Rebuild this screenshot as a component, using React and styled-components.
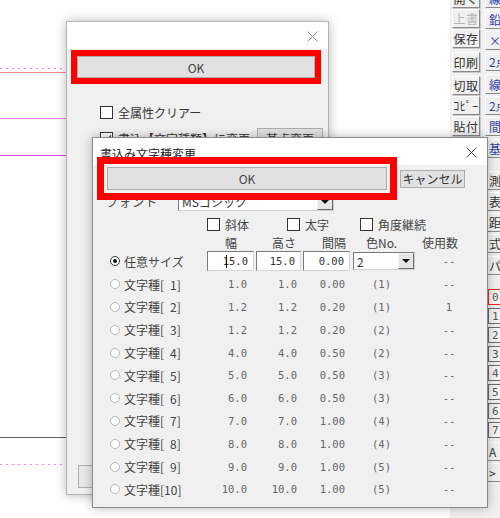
import React from "react";
import styled, { createGlobalStyle } from "styled-components";

const GlobalStyle = createGlobalStyle`
  html, body { margin: 0; padding: 0; background: #fff; }
  body {
    font-family: "Noto Sans CJK JP", "Noto Sans", sans-serif;
    font-size: 12px;
    color: #333;
  }
`;

const leftTools = [
  { t: "開く", h: 19, m: -11 },
  { t: "上書", h: 19, m: 1, off: true },
  { t: "保存", h: 19, m: 1 },
  { t: "印刷", h: 20, m: 4 },
  { t: "切取", h: 19, m: 4 },
  { t: "ｺﾋﾟｰ", h: 19, m: 1 },
  { t: "貼付", h: 20, m: 1 },
];

const rightTools = [
  { t: "線", h: 19, m: -11, blue: true },
  { t: "鉛", h: 19, m: 2, blue: true },
  { t: "×", h: 19, m: 2, blue: true },
  { t: "2点", h: 19, m: 2, blue: true },
  { t: "線", h: 20, m: 3, blue: true },
  { t: "2点", h: 19, m: 2, blue: true },
  { t: "間", h: 19, m: 2, blue: true },
  { t: "基", h: 19, m: 3, blue: true },
  { t: "測", h: 19, m: 13 },
  { t: "表", h: 19, m: 2 },
  { t: "距", h: 19, m: 2 },
  { t: "式", h: 19, m: 2 },
  { t: "パ", h: 19, m: 3 },
];

const layers = ["0", "1", "2", "3", "4", "5", "6", "7"];

const rows = [
  ["1.0", "1.0", "0.00", "(1)", "--"],
  ["1.2", "1.2", "0.20", "(1)", "1"],
  ["1.2", "1.2", "0.20", "(2)", "--"],
  ["4.0", "4.0", "0.50", "(2)", "--"],
  ["5.0", "5.0", "0.50", "(3)", "--"],
  ["6.0", "6.0", "0.50", "(3)", "--"],
  ["7.0", "7.0", "1.00", "(4)", "--"],
  ["8.0", "8.0", "1.00", "(4)", "--"],
  ["9.0", "9.0", "1.00", "(5)", "--"],
  ["10.0", "10.0", "1.00", "(5)", "--"],
];

function CloseIcon({ color }) {
  return (
    <svg width="11" height="11" viewBox="0 0 11 11">
      <path d="M0.5 0.5L10.5 10.5M10.5 0.5L0.5 10.5" stroke={color} strokeWidth="1" />
    </svg>
  );
}

function App() {
  return (
    <>
      <GlobalStyle />
      <Screen>
        <Canvas>
          <svg width="450" height="518">
            <line x1="0" y1="68.5" x2="200" y2="68.5" stroke="#ff70ff" strokeDasharray="2 4" />
            <line x1="0" y1="72.5" x2="200" y2="72.5" stroke="#f28a8a" />
            <line x1="0" y1="118.5" x2="200" y2="118.5" stroke="#ff80ff" />
            <line x1="0" y1="155.5" x2="200" y2="155.5" stroke="#d848d8" />
            <line x1="0" y1="437.5" x2="200" y2="437.5" stroke="#606060" />
            <line x1="0" y1="464.5" x2="200" y2="464.5" stroke="#ff70ff" strokeDasharray="2 4" />
          </svg>
        </Canvas>

        <Toolbar>
          <ToolColumn $w={28}>
            {leftTools.map((b, i) => (
              <ToolBtn key={i} $h={b.h} $m={b.m} $off={b.off}>
                {b.t}
              </ToolBtn>
            ))}
          </ToolColumn>
          <ToolColumn $w={30}>
            {rightTools.map((b, i) => (
              <SideBtn key={i} $h={b.h} $m={b.m} $blue={b.blue}>
                {b.t}
              </SideBtn>
            ))}
            {layers.map((n, i) => (
              <LayerBtn key={n} $m={i === 0 ? 14 : 3} $active={i === 0}>
                {n}
              </LayerBtn>
            ))}
            <SideBtn $h={19} $m={4}>A</SideBtn>
            <SideBtn $h={19} $m={2}>&gt;</SideBtn>
          </ToolColumn>
        </Toolbar>

        <BackDialog>
          <TitleBar>
            <span />
            <CloseBox>
              <CloseIcon color="#8c8c8c" />
            </CloseBox>
          </TitleBar>
          <BackBody>
            <WideButton $w={238} $h={22} $ring={6} $offset={0}>OK</WideButton>
            <OptionLine $mt={28}>
              <CheckBox />
              <span>全属性クリアー</span>
            </OptionLine>
            <OptionLine $mt={13}>
              <CheckBox $checked />
              <span>書込【文字種類】に変更</span>
              <PlainButton $w={66} $h={22}>基点変更</PlainButton>
            </OptionLine>
            <BottomButton />
          </BackBody>
        </BackDialog>

        <FrontDialog>
          <TitleBar>
            <Title>書込み文字種変更</Title>
            <CloseBox>
              <CloseIcon color="#444" />
            </CloseBox>
          </TitleBar>
          <FrontBody>
            <ButtonRow>
              <WideButton $w={280} $h={23} $ring={7} $offset={3}>OK</WideButton>
              <PlainButton $w={65} $h={18}>キャンセル</PlainButton>
            </ButtonRow>
            <FontRow>
              <FontLabel>フォント</FontLabel>
              <Combo $w={156}>
                <ComboText>MSゴシック</ComboText>
                <DropBtn />
              </Combo>
            </FontRow>
            <StyleRow>
              <CheckItem $w={80}>
                <CheckBox />
                斜体
              </CheckItem>
              <CheckItem $w={73}>
                <CheckBox />
                太字
              </CheckItem>
              <CheckItem>
                <CheckBox />
                角度継続
              </CheckItem>
            </StyleRow>
            <Table>
              <span />
              <Head $pl={18}>幅</Head>
              <Head $pl={16}>高さ</Head>
              <Head $pl={19}>間隔</Head>
              <Head $pl={13}>色No.</Head>
              <Head $pl={5}>使用数</Head>

              <RowLabel>
                <Radio $on />
                任意サイズ
              </RowLabel>
              <Field $w={47}>
                <Caret />
                15.0
              </Field>
              <Field $w={45}>15.0</Field>
              <Field $w={47}>0.00</Field>
              <Combo $w={62}>
                <ComboText>2</ComboText>
                <DropBtn />
              </Combo>
              <Count>--</Count>

              {rows.map((r, i) => (
                <React.Fragment key={i}>
                  <RowLabel>
                    <Radio />
                    {`文字種[${String(i + 1).padStart(2, "\u2002")}]`}
                  </RowLabel>
                  <Num $pr={9}>{r[0]}</Num>
                  <Num $pr={6}>{r[1]}</Num>
                  <Num $pr={8}>{r[2]}</Num>
                  <ColorNo>{r[3]}</ColorNo>
                  <Count>{r[4]}</Count>
                </React.Fragment>
              ))}
            </Table>
          </FrontBody>
        </FrontDialog>
      </Screen>
    </>
  );
}

export default App;

const Screen = styled.div`
  position: relative;
  width: 500px;
  height: 518px;
  overflow: hidden;
  display: grid;
  grid-template-columns: 450px 50px;
`;

const Canvas = styled.div`
  background: #fff;
  svg {
    display: block;
  }
`;

const Toolbar = styled.div`
  background: #f0f0f0;
  display: flex;
  gap: 5px;
  padding-left: 2px;
  overflow: hidden;
`;

const ToolColumn = styled.div`
  display: flex;
  flex-direction: column;
  width: ${({ $w }) => $w}px;
  flex-shrink: 0;
`;

const ToolBtn = styled.div`
  box-sizing: border-box;
  height: ${({ $h }) => $h}px;
  margin-top: ${({ $m }) => $m}px;
  border: 1px solid;
  border-color: #fff #8a8a8a #8a8a8a #fff;
  box-shadow: 1px 1px 0 #c8c8c8;
  display: flex;
  align-items: center;
  justify-content: center;
  font-size: 12px;
  letter-spacing: 0.5px;
  color: ${({ $off }) => ($off ? "#b4b4b4" : "#333")};
  white-space: nowrap;
`;

const SideBtn = styled.div`
  box-sizing: border-box;
  height: ${({ $h }) => $h}px;
  margin-top: ${({ $m }) => $m}px;
  border-left: 1px solid #fff;
  border-top: 1px solid #fff;
  border-bottom: 1px solid #8a8a8a;
  padding-left: 3px;
  display: flex;
  align-items: center;
  font-size: 12px;
  color: ${({ $blue }) => ($blue ? "#2f3fa8" : "#333")};
  white-space: nowrap;
`;

const LayerBtn = styled.div`
  box-sizing: border-box;
  height: 16px;
  margin-top: ${({ $m }) => $m}px;
  margin-left: 3px;
  border: 1px solid ${({ $active }) => ($active ? "#ff2020" : "#6a6a6a")};
  border-right: none;
  background: #f4f4f4;
  padding-left: 3px;
  display: flex;
  align-items: center;
  font-family: "DejaVu Sans Mono", monospace;
  font-size: 11px;
  color: #555;
`;

const Dialog = styled.div`
  position: absolute;
  box-sizing: border-box;
  display: flex;
  flex-direction: column;
  background: #f0f0f0;
  box-shadow: 0 0 10px rgba(0, 0, 0, 0.28);
`;

const BackDialog = styled(Dialog)`
  left: 66px;
  top: 21px;
  width: 263px;
  height: 474px;
  border: 1px solid #b4b4b4;
`;

const FrontDialog = styled(Dialog)`
  left: 92px;
  top: 137px;
  width: 396px;
  height: 371px;
  border: 1px solid #8a8a8a;
`;

const TitleBar = styled.div`
  height: 27px;
  flex-shrink: 0;
  background: #fff;
  display: flex;
  align-items: center;
  justify-content: space-between;
  padding: 0 10px 0 7px;
`;

const Title = styled.div`
  font-size: 12px;
  color: #222;
  padding-top: 3px;
`;

const CloseBox = styled.div`
  display: flex;
  align-items: center;
  padding-top: 2px;
`;

const BackBody = styled.div`
  flex: 1;
  display: flex;
  flex-direction: column;
  padding: 7px 5px 6px 10px;
`;

const FrontBody = styled.div`
  flex: 1;
  display: flex;
  flex-direction: column;
  padding-top: 2px;
`;

const WideButton = styled.div`
  position: relative;
  z-index: 1;
  box-sizing: border-box;
  width: ${({ $w }) => $w}px;
  height: ${({ $h }) => $h}px;
  border: 1px solid #adadad;
  background: #e1e1e1;
  display: flex;
  align-items: center;
  justify-content: center;
  font-size: 12px;
  color: #444;
  outline: ${({ $ring }) => $ring}px solid #ff0000;
  outline-offset: ${({ $offset }) => $offset}px;
`;

const PlainButton = styled.div`
  box-sizing: border-box;
  width: ${({ $w }) => $w}px;
  height: ${({ $h }) => $h}px;
  border: 1px solid #adadad;
  background: #e1e1e1;
  display: flex;
  align-items: center;
  justify-content: center;
  font-size: 12px;
  color: #333;
  margin-left: auto;
  white-space: nowrap;
`;

const BottomButton = styled.div`
  box-sizing: border-box;
  margin-top: auto;
  margin-left: 1px;
  width: 90px;
  height: 23px;
  border: 1px solid #adadad;
  background: #e8e8e8;
`;

const OptionLine = styled.div`
  display: flex;
  align-items: center;
  gap: 5px;
  margin-top: ${({ $mt }) => $mt}px;
  margin-left: 23px;
  height: 13px;
  font-size: 12px;
  white-space: nowrap;
`;

const CheckBox = styled.span`
  box-sizing: border-box;
  width: 13px;
  height: 13px;
  flex-shrink: 0;
  border: 1px solid #333;
  background: #fff;
  position: relative;
  &::after {
    content: "";
    display: ${({ $checked }) => ($checked ? "block" : "none")};
    position: absolute;
    left: 3px;
    top: 0px;
    width: 4px;
    height: 8px;
    border: solid #222;
    border-width: 0 1.5px 1.5px 0;
    transform: rotate(40deg);
  }
`;

const ButtonRow = styled.div`
  display: flex;
  align-items: center;
  padding-left: 14px;
  gap: 13px;
  & > ${PlainButton} {
    margin-left: 0;
  }
`;

const FontRow = styled.div`
  display: flex;
  align-items: center;
  margin-top: 3px;
  padding-left: 13px;
  height: 17px;
`;

const FontLabel = styled.div`
  width: 72px;
  font-size: 12px;
  color: #444;
  letter-spacing: 1px;
`;

const Combo = styled.div`
  box-sizing: border-box;
  width: ${({ $w }) => $w}px;
  height: ${({ $h }) => $h || 18}px;
  border: 1px solid #7a7a7a;
  border-right-color: #d0d0d0;
  border-bottom-color: #d0d0d0;
  background: #fff;
  display: flex;
  align-items: center;
  justify-content: space-between;
  align-self: center;
`;

const ComboText = styled.span`
  padding-left: 3px;
  font-size: 12px;
  color: #333;
`;

const DropBtn = styled.span`
  box-sizing: border-box;
  width: 16px;
  height: 100%;
  border: 1px solid;
  border-color: #f4f4f4 #6a6a6a #6a6a6a #f4f4f4;
  background: #e6e6e6;
  display: flex;
  align-items: center;
  justify-content: center;
  &::before {
    content: "";
    border-left: 4px solid transparent;
    border-right: 4px solid transparent;
    border-top: 4px solid #111;
  }
`;

const StyleRow = styled.div`
  display: flex;
  align-items: center;
  margin-top: 8px;
  padding-left: 114px;
  height: 13px;
`;

const CheckItem = styled.div`
  display: flex;
  align-items: center;
  gap: 5px;
  width: ${({ $w }) => ($w ? `${$w}px` : "auto")};
  font-size: 12px;
  color: #444;
  white-space: nowrap;
`;

const Table = styled.div`
  display: grid;
  grid-template-columns: 99px 49px 47px 50px 64px 70px;
  grid-template-rows: 15px;
  grid-auto-rows: 22.8px;
  align-items: center;
  margin-top: 4px;
  padding-left: 15px;
`;

const Head = styled.div`
  padding-left: ${({ $pl }) => $pl}px;
  font-size: 12px;
  color: #444;
  white-space: nowrap;
  line-height: 15px;
`;

const RowLabel = styled.div`
  display: flex;
  align-items: center;
  font-size: 12px;
  color: #444;
  white-space: pre;
`;

const Radio = styled.span`
  box-sizing: border-box;
  width: 10px;
  height: 10px;
  margin: 0 4px 0 2px;
  border-radius: 50%;
  border: 1px solid ${({ $on }) => ($on ? "#333" : "#b8b8b8")};
  background: #fff;
  display: flex;
  align-items: center;
  justify-content: center;
  &::after {
    content: "";
    display: ${({ $on }) => ($on ? "block" : "none")};
    width: 4px;
    height: 4px;
    border-radius: 50%;
    background: #111;
  }
`;

const Field = styled.div`
  position: relative;
  box-sizing: border-box;
  width: ${({ $w }) => $w}px;
  height: 20px;
  border: 1px solid #7a7a7a;
  border-right-color: #d4d4d4;
  border-bottom-color: #d4d4d4;
  background: #fff;
  display: flex;
  align-items: center;
  justify-content: flex-end;
  padding-right: 5px;
  font-family: "DejaVu Sans Mono", monospace;
  font-size: 10.5px;
  color: #333;
`;

const Caret = styled.span`
  position: absolute;
  left: 18px;
  top: 3px;
  height: 13px;
  border-left: 1px solid #000;
`;

const Num = styled.div`
  text-align: right;
  padding-right: ${({ $pr }) => $pr}px;
  font-family: "DejaVu Sans Mono", monospace;
  font-size: 10.5px;
  color: #666;
`;

const ColorNo = styled.div`
  padding-left: 19px;
  font-family: "DejaVu Sans Mono", monospace;
  font-size: 10.5px;
  color: #666;
`;

const Count = styled.div`
  text-align: center;
  padding-right: 6px;
  font-family: "DejaVu Sans Mono", monospace;
  font-size: 10.5px;
  color: #666;
`;
